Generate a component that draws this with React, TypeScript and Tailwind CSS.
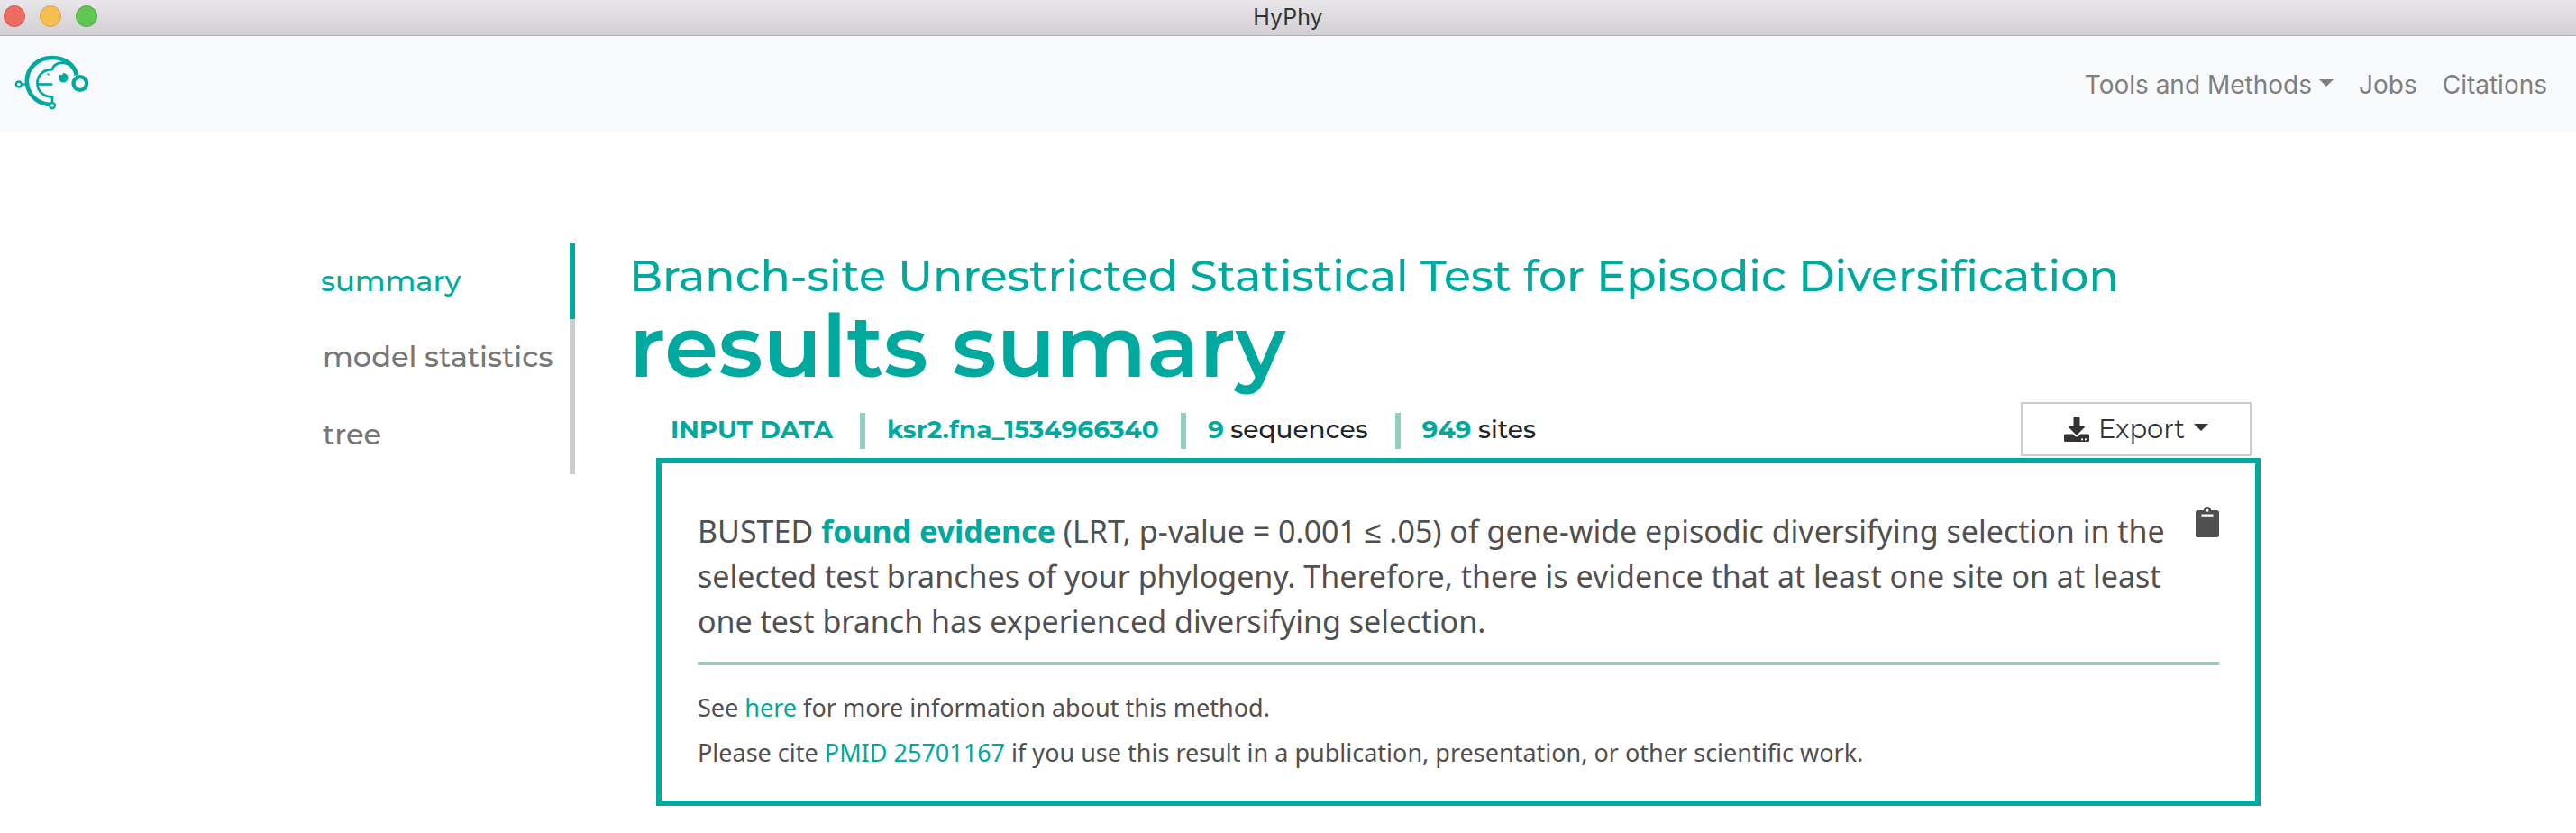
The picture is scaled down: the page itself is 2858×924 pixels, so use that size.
import type { ReactNode } from "react";

const display = "font-['Montserrat','Inter',sans-serif]";

function Logo() {
  return (
    <svg viewBox="46 184 252 184" className="h-[61px] w-[84px]" fill="none" stroke="#00a99d" aria-hidden="true">
      <path d="M164 350 C120 347 87 314 87 271 C87 227 124 193 171 193 C216 193 248 219 253 252" strokeWidth="14" />
      <path d="M171 233 C176 217 190 210 207 210 C226 211 240 222 250 240" strokeWidth="9" />
      <path d="M196 198 C222 203 240 218 249 238 C238 221 226 212 210 208 Z" fill="#00a99d" stroke="none" />
      <path d="M176 233 C145 230 122 251 122 278 C122 305 144 325 172 324 L172 343" strokeWidth="8" />
      <path d="M122 282 H173" strokeWidth="8" />
      <path d="M69 282 H86" strokeWidth="7" />
      <circle cx="60" cy="282" r="9" strokeWidth="7" />
      <circle cx="172" cy="353" r="9" strokeWidth="7" fill="#f8f9fb" />
      <circle cx="265" cy="279" r="22" strokeWidth="13" fill="#f8f9fb" />
      <circle cx="209" cy="260" r="16" fill="#00a99d" stroke="none" />
      <path d="M198 240 H208 C209 246 207 251 203 251 C200 251 198 250 197 247 Z" fill="#f8f9fb" stroke="none" />
      <path d="M153 247 C157 244 162 246 164 251 C161 253 157 252 156 249 Z" fill="#00a99d" stroke="none" />
    </svg>
  );
}

function Caret() {
  return <span className="border-x-8 border-t-8 border-x-transparent border-t-current" />;
}

function DownloadIcon() {
  return (
    <svg viewBox="0 0 28 28" className="size-7" fill="currentColor" aria-hidden="true">
      <path d="M10.5 1 Q10.500 0 11.500 0 H16.500 Q17.500 0 17.500 1 V10.500 H22.200 Q23.700 10.700 22.800 12 L15 20 Q14 21 13 20 L5.200 12 Q4.300 10.700 5.800 10.500 H10.500 Z" />
      <path
        fillRule="evenodd"
        d="M1.500 19.500 H9.800 L12 21.700 Q14 23.300 16 21.700 L18.200 19.500 H26.500 Q28 19.500 28 21 V26.500 Q28 28 26.500 28 H1.500 Q0 28 0 26.500 V21 Q0 19.500 1.500 19.500 Z M19 25.400 a1.100 1.100 0 1 0 2.200 0 a1.100 1.100 0 1 0 -2.200 0 Z M22.800 25.400 a1.100 1.100 0 1 0 2.200 0 a1.100 1.100 0 1 0 -2.200 0 Z"
      />
    </svg>
  );
}

function ClipboardIcon() {
  return (
    <svg viewBox="0 0 26 34" className="h-[34px] w-[26px]" fill="currentColor" aria-hidden="true">
      <path
        fillRule="evenodd"
        d="M2.500 4 H8.800 C9 1.600 10.800 0 13 0 C15.200 0 17 1.600 17.200 4 H23.500 Q26 4 26 6.500 V31.500 Q26 34 23.500 34 H2.500 Q0 34 0 31.500 V6.500 Q0 4 2.500 4 Z M11.500 4.200 a1.500 1.500 0 1 0 3 0 a1.500 1.500 0 1 0 -3 0 Z M6.500 8.500 V10.800 H19.500 V8.500 Z"
      />
    </svg>
  );
}

function Divider() {
  return <span className="mt-1 h-10 w-[6px] bg-[#8fd0c1]" />;
}

function Accent({ children }: { children: ReactNode }) {
  return <b className="font-bold text-[#00a99d]">{children}</b>;
}

export default function App() {
  return (
    <div className="min-h-screen bg-white font-['Noto_Sans',sans-serif] text-[#505050]">
      <div className="relative flex h-10 items-center gap-4 border-b border-[#b1afb1] bg-linear-to-b from-[#e8e6e8] to-[#d2d0d2] px-1 pb-1">
        <button aria-label="Close" className="size-6 rounded-full border border-[#d8564d] bg-[#ed6b60]" />
        <button aria-label="Minimize" className="size-6 rounded-full border border-[#d9a13c] bg-[#f6be50]" />
        <button aria-label="Zoom" className="size-6 rounded-full border border-[#4fab40] bg-[#62c655]" />
        <span className="pointer-events-none absolute inset-x-0 top-0 text-center font-['Inter',sans-serif] text-[25px] leading-[38px] text-[#333]">
          HyPhy
        </span>
      </div>

      <header className="flex h-[106px] items-center justify-between bg-[#f8f9fb] px-4">
        <a href="#home" aria-label="HyPhy home" className="pb-1">
          <Logo />
        </a>
        <nav className="flex items-center gap-7 pt-[2px] pr-4 font-['Inter',sans-serif] text-[28px] leading-10 text-[#7f7f7f]">
          <button className="flex items-center gap-2">
            Tools and Methods
            <span className="flex pb-1">
              <Caret />
            </span>
          </button>
          <a href="#jobs">Jobs</a>
          <a href="#citations">Citations</a>
        </nav>
      </header>

      <main className="flex gap-[60px] px-[350px] pt-[124px]">
        <nav className={`${display} flex w-72 shrink-0 flex-col self-start text-[32px] leading-10 font-medium whitespace-nowrap text-[#777]`}>
          <a href="#summary" className="flex h-[84px] items-center border-r-[6px] border-[#00a99d] pl-[6px] text-[#00a99d]">
            summary
          </a>
          <a href="#model" className="flex h-[86px] items-center border-r-[6px] border-[#ccc] pb-[2px] pl-2">
            model statistics
          </a>
          <a href="#tree" className="flex h-[86px] items-center border-r-[6px] border-[#ccc] pb-[2px] pl-2">
            tree
          </a>
        </nav>

        <section className="min-w-0 flex-1">
          <h1 className={`${display} text-[#00a99d]`}>
            <span className="block text-[49px] leading-[72px] font-medium">
              Branch-site Unrestricted Statistical Test for Episodic Diversification
            </span>
            <span className="block text-[96px] leading-[84px] font-semibold">results sumary</span>
          </h1>

          <div className="mt-5 mb-[2px] flex items-start justify-between pr-[10px] pl-[46px]">
            <div className={`${display} flex items-center gap-6 pt-2 text-[28px] leading-10 font-medium text-[#212529]`}>
              <span className="pr-[6px]">
                <Accent>INPUT DATA</Accent>
              </span>
              <Divider />
              <Accent>ksr2.fna_1534966340</Accent>
              <Divider />
              <span className="pr-[6px]">
                <Accent>9</Accent> sequences
              </span>
              <Divider />
              <span>
                <Accent>949</Accent> sites
              </span>
            </div>
            <button className={`${display} flex h-[60px] w-64 items-center justify-center gap-[10px] border-2 border-[#ccc] bg-white text-[29px] text-[#333]`}>
              <DownloadIcon />
              Export
              <span className="flex pb-1">
                <Caret />
              </span>
            </button>
          </div>

          <div className="ml-[30px] border-[6px] border-[#00a99d] px-10 pt-12 pb-7">
            <div className="flex items-start justify-between gap-6 border-b-4 border-[#a1c6b3] pb-[20px]">
              <p className="pt-[2px] text-[34px] leading-[50px]">
                BUSTED <Accent>found evidence</Accent> (LRT, p-value = 0.001 ≤ .05) of gene-wide episodic diversifying
                selection in the selected test branches of your phylogeny. Therefore, there is evidence that at least
                one site on at least one test branch has experienced diversifying selection.
              </p>
              <button aria-label="Copy to clipboard" className="shrink-0">
                <ClipboardIcon />
              </button>
            </div>
            <p className="mt-[22px] text-[27px] leading-[50px]">
              See{" "}
              <a href="#method" className="text-[#00a99d]">
                here
              </a>{" "}
              for more information about this method.
              <br />
              Please cite{" "}
              <a href="#pmid" className="text-[#00a99d]">
                PMID 25701167
              </a>{" "}
              if you use this result in a publication, presentation, or other scientific work.
            </p>
          </div>
        </section>
      </main>
    </div>
  );
}
